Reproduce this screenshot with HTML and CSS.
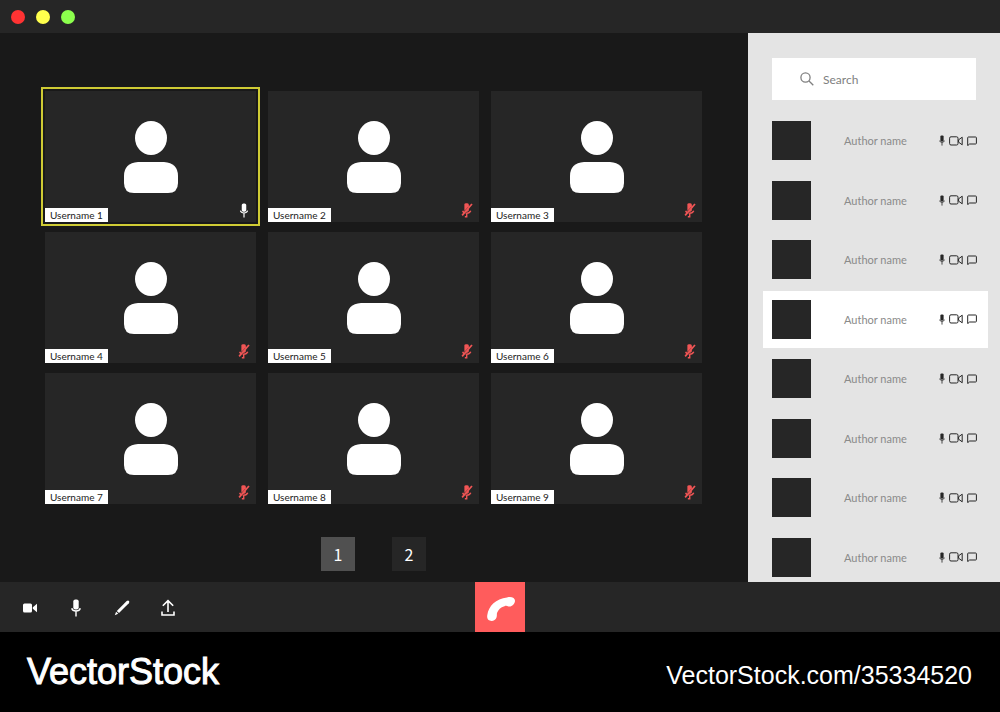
FILE: index.html
```html
<!DOCTYPE html>
<html lang="en">
<head>
    <meta charset="UTF-8">
    <meta name="viewport" content="width=device-width, initial-scale=1.0">
    <title>Video Conference</title>
    <link rel="stylesheet" href="styles.css">
</head>
<body>

    <!-- Shared icons -->
    <svg class="icon-defs" aria-hidden="true">
        <symbol id="person" viewBox="0 0 54 72">
            <ellipse cx="27" cy="17" rx="16" ry="17"/>
            <path d="M14 41H40Q54 42 54 55V62Q54 72 44 72H10Q0 72 0 62V55Q0 42 14 41Z"/>
        </symbol>
        <symbol id="mic" viewBox="0 0 10 18">
            <rect x="2.3" y="0.5" width="5.4" height="10" rx="2"/>
            <path d="M0.7 9.2Q1.5 12 5 12T9.3 9.2M5 12V17.5" fill="none" stroke="currentColor" stroke-width="1.4"/>
        </symbol>
        <symbol id="mic-off" viewBox="0 0 12 16">
            <path d="M3.2 1.5Q3.2 0.3 5 0.3H6.3Q8 0.3 8 2V3.4L3.2 8.4Z"/>
            <path d="M8 5.8V7.5Q8 9.4 6 9.4H4.6Z"/>
            <path d="M11.3 1L0.8 13.2" fill="none" stroke="currentColor" stroke-width="1.8"/>
            <path d="M1.4 8.2Q1.8 9.6 3 10.2M4.5 10.8Q8.6 11.4 10 8.2M5.7 11V15.5M3.7 14.6H5.7" fill="none" stroke="currentColor" stroke-width="1.5"/>
        </symbol>
        <symbol id="camera-line" viewBox="0 0 14 10">
            <rect x="0.6" y="0.8" width="8.4" height="8.2" rx="1.4" fill="none" stroke="currentColor"/>
            <path d="M13.2 1.2V8.8L9.6 6.2V3.8Z" fill="none" stroke="currentColor"/>
        </symbol>
        <symbol id="chat" viewBox="0 0 10 10">
            <path d="M0.7 9.6V1.7Q0.7 1 1.4 1H8.6Q9.4 1 9.4 1.7V7.3Q9.4 8 8.6 8H2.6Z" fill="none" stroke="currentColor"/>
        </symbol>
    </svg>

    <header class="title-bar">
        <span class="dot red"></span>
        <span class="dot yellow"></span>
        <span class="dot green"></span>
    </header>

    <div class="content">
        <main class="stage">
            <div class="tiles">
                <div class="tile active">
                    <svg class="person"><use href="#person"/></svg>
                    <span class="username">Username 1</span>
                    <svg class="tile-mic"><use href="#mic"/></svg>
                </div>
                <div class="tile">
                    <svg class="person"><use href="#person"/></svg>
                    <span class="username">Username 2</span>
                    <svg class="tile-mic muted"><use href="#mic-off"/></svg>
                </div>
                <div class="tile">
                    <svg class="person"><use href="#person"/></svg>
                    <span class="username">Username 3</span>
                    <svg class="tile-mic muted"><use href="#mic-off"/></svg>
                </div>
                <div class="tile">
                    <svg class="person"><use href="#person"/></svg>
                    <span class="username">Username 4</span>
                    <svg class="tile-mic muted"><use href="#mic-off"/></svg>
                </div>
                <div class="tile">
                    <svg class="person"><use href="#person"/></svg>
                    <span class="username">Username 5</span>
                    <svg class="tile-mic muted"><use href="#mic-off"/></svg>
                </div>
                <div class="tile">
                    <svg class="person"><use href="#person"/></svg>
                    <span class="username">Username 6</span>
                    <svg class="tile-mic muted"><use href="#mic-off"/></svg>
                </div>
                <div class="tile">
                    <svg class="person"><use href="#person"/></svg>
                    <span class="username">Username 7</span>
                    <svg class="tile-mic muted"><use href="#mic-off"/></svg>
                </div>
                <div class="tile">
                    <svg class="person"><use href="#person"/></svg>
                    <span class="username">Username 8</span>
                    <svg class="tile-mic muted"><use href="#mic-off"/></svg>
                </div>
                <div class="tile">
                    <svg class="person"><use href="#person"/></svg>
                    <span class="username">Username 9</span>
                    <svg class="tile-mic muted"><use href="#mic-off"/></svg>
                </div>
            </div>

            <nav class="pages" aria-label="Pages">
                <button class="page current" type="button">1</button>
                <button class="page" type="button">2</button>
            </nav>
        </main>

        <aside class="sidebar">
            <label class="search">
                <svg class="search-icon" viewBox="0 0 14 14"><circle cx="5.5" cy="5.5" r="4.6"/><path d="M9 9L13.3 13.3"/></svg>
                <input type="search" placeholder="Search" aria-label="Search">
            </label>

            <ul class="authors">
                <li class="author">
                    <span class="avatar"></span><span class="name">Author name</span>
                    <svg class="small-mic"><use href="#mic"/></svg><svg class="small-camera"><use href="#camera-line"/></svg><svg class="small-chat"><use href="#chat"/></svg>
                </li>
                <li class="author">
                    <span class="avatar"></span><span class="name">Author name</span>
                    <svg class="small-mic"><use href="#mic"/></svg><svg class="small-camera"><use href="#camera-line"/></svg><svg class="small-chat"><use href="#chat"/></svg>
                </li>
                <li class="author">
                    <span class="avatar"></span><span class="name">Author name</span>
                    <svg class="small-mic"><use href="#mic"/></svg><svg class="small-camera"><use href="#camera-line"/></svg><svg class="small-chat"><use href="#chat"/></svg>
                </li>
                <li class="author selected">
                    <span class="avatar"></span><span class="name">Author name</span>
                    <svg class="small-mic"><use href="#mic"/></svg><svg class="small-camera"><use href="#camera-line"/></svg><svg class="small-chat"><use href="#chat"/></svg>
                </li>
                <li class="author">
                    <span class="avatar"></span><span class="name">Author name</span>
                    <svg class="small-mic"><use href="#mic"/></svg><svg class="small-camera"><use href="#camera-line"/></svg><svg class="small-chat"><use href="#chat"/></svg>
                </li>
                <li class="author">
                    <span class="avatar"></span><span class="name">Author name</span>
                    <svg class="small-mic"><use href="#mic"/></svg><svg class="small-camera"><use href="#camera-line"/></svg><svg class="small-chat"><use href="#chat"/></svg>
                </li>
                <li class="author">
                    <span class="avatar"></span><span class="name">Author name</span>
                    <svg class="small-mic"><use href="#mic"/></svg><svg class="small-camera"><use href="#camera-line"/></svg><svg class="small-chat"><use href="#chat"/></svg>
                </li>
                <li class="author">
                    <span class="avatar"></span><span class="name">Author name</span>
                    <svg class="small-mic"><use href="#mic"/></svg><svg class="small-camera"><use href="#camera-line"/></svg><svg class="small-chat"><use href="#chat"/></svg>
                </li>
            </ul>
        </aside>
    </div>

    <div class="controls">
        <div class="tools">
            <button class="tool" type="button" aria-label="Camera">
                <svg width="14" height="10" viewBox="0 0 14 10"><rect x="0" y="0.5" width="9" height="9" rx="1.5"/><path d="M14 0.8V9.2L9.8 5.8V4.2Z"/></svg>
            </button>
            <button class="tool" type="button" aria-label="Microphone">
                <svg width="10" height="18"><use href="#mic"/></svg>
            </button>
            <button class="tool" type="button" aria-label="Draw">
                <svg width="16" height="16" viewBox="0 0 16 16"><path d="M12.7 1.1Q14 0 15 1Q15.9 2 14.8 3.2L5 13L2.8 10.9Z"/><path d="M2.1 11.7L4.2 13.7L0.8 15.2Z"/></svg>
            </button>
            <button class="tool" type="button" aria-label="Share">
                <svg width="14" height="18" viewBox="0 0 14 18"><path d="M7 13V1.8M1.8 6.8L7 1.6L12.2 6.8M1 12.5V16H13V12.5" fill="none" stroke="currentColor" stroke-width="1.6"/></svg>
            </button>
        </div>
        <button class="hang-up" type="button" aria-label="End call">
            <svg width="30" height="26" viewBox="0 0 30 26"><path d="M1.3 19C2.5 10 10 2.5 21 1.4C25.5 0.2 29.2 1.8 29 5C28.8 8.3 25.5 11.2 22.5 10.4C20.8 9.9 20 9.6 18.5 10.2C14.5 11.4 12.3 13.6 11.1 16.8C10.6 18 11.2 19.4 10.5 21.4C9.6 24.2 6.5 25.5 3.8 24.6C1.2 23.7 0.9 21 1.3 19Z"/></svg>
        </button>
    </div>

    <footer class="footer">
        <span class="brand">VectorStock</span>
        <a class="link" href="#">VectorStock.com/35334520</a>
    </footer>

</body>
</html>
```

FILE: styles.css
```css
* {
    margin: 0;
    padding: 0;
    box-sizing: border-box;
}

body {
    font-family: 'Lato', 'Noto Sans', sans-serif;
    background: #000000;
    color: #ffffff;
    display: flex;
    flex-direction: column;
    min-height: 100vh;
}

svg {
    display: block;
    flex: none;
    fill: currentColor;
}

button {
    border: none;
    color: #ffffff;
    font-family: inherit;
    cursor: pointer;
}

.icon-defs {
    position: absolute;
    width: 0;
    height: 0;
}

/* Title bar */
.title-bar {
    display: flex;
    align-items: center;
    gap: 11px;
    height: 33px;
    padding: 0 11px;
    background: #262626;
}

.dot {
    width: 14px;
    height: 14px;
    border-radius: 50%;
}

.red {
    background: #ff3333;
}

.yellow {
    background: #ffff4d;
}

.green {
    background: #8cff4d;
}

/* Video tiles */
.content {
    flex: 1;
    display: flex;
    background: #191919;
}

.stage {
    flex: 1;
    padding: 58px 46px 11px 45px;
    display: flex;
    flex-direction: column;
    justify-content: space-between;
}

.tiles {
    display: grid;
    grid-template-columns: repeat(3, 1fr);
    gap: 10px 12px;
}

.tile {
    position: relative;
    display: flex;
    align-items: center;
    justify-content: center;
    aspect-ratio: 211 / 131;
    background: #262626;
}

.tile.active {
    outline: 2px solid #cfcb34;
    outline-offset: 2px;
}

.person {
    width: 54px;
    height: 72px;
}

.username {
    position: absolute;
    left: 0;
    bottom: 0;
    padding: 0 5px;
    background: #ffffff;
    color: #222222;
    font-size: 10px;
    line-height: 14px;
}

.tile-mic {
    position: absolute;
    right: 6px;
    bottom: 4px;
    width: 12px;
    height: 15px;
}

.muted {
    color: #f15555;
}

.pages {
    display: flex;
    justify-content: center;
    gap: 37px;
}

.page {
    width: 34px;
    height: 34px;
    background: #262626;
    font-family: 'Noto Sans CJK SC', sans-serif;
    font-size: 16px;
    line-height: 34px;
}

.page.current {
    background: #505050;
}

/* Sidebar */
.sidebar {
    display: flex;
    flex-direction: column;
    gap: 12px;
    width: 252px;
    padding: 25px 12px 0 15px;
    background: #e4e4e4;
    overflow: hidden;
}

.search {
    display: flex;
    align-items: center;
    gap: 9px;
    height: 42px;
    margin: 0 12px 0 9px;
    padding: 0 28px;
    background: #ffffff;
}

.search-icon {
    width: 14px;
    height: 14px;
    fill: none;
    stroke: #808080;
    stroke-width: 1.3;
}

.search input {
    flex: 1;
    min-width: 0;
    border: none;
    outline: none;
    background: none;
    font-family: inherit;
    font-size: 12px;
    color: #444444;
}

.search input::placeholder {
    color: #808080;
}

.authors {
    flex: 1;
    display: flex;
    flex-direction: column;
    justify-content: space-between;
    margin-bottom: -4px;
    list-style: none;
}

.author {
    display: flex;
    align-items: center;
    gap: 4px;
    height: 57px;
    padding: 0 11px 0 9px;
    color: #262626;
}

.author.selected {
    background: #ffffff;
}

.avatar {
    width: 39px;
    height: 39px;
    background: #262626;
}

.name {
    flex: 1;
    padding-left: 29px;
    color: #8a8a8a;
    font-size: 11px;
}

.small-mic {
    width: 6px;
    height: 11px;
}

.small-camera {
    width: 14px;
    height: 10px;
}

.small-chat {
    width: 10px;
    height: 10px;
}

/* Call controls */
.controls {
    display: grid;
    grid-template-columns: 1fr 50px 1fr;
    height: 50px;
    background: #262626;
}

.tools {
    display: flex;
    padding-left: 7px;
}

.tool {
    display: flex;
    align-items: center;
    justify-content: center;
    width: 46px;
    padding-top: 2px;
    background: none;
}

.hang-up {
    display: flex;
    align-items: center;
    justify-content: center;
    padding: 3px 0 0 2px;
    background: #ff5c5c;
}

/* Footer */
.footer {
    display: flex;
    align-items: center;
    justify-content: space-between;
    height: 80px;
    padding: 0 28px 0 27px;
}

.brand {
    font-family: 'Liberation Sans', Arial, sans-serif;
    font-size: 36px;
    -webkit-text-stroke: 1px #ffffff;
}

.link {
    padding-top: 6px;
    font-family: 'Liberation Sans', Arial, sans-serif;
    font-size: 25px;
    color: #ffffff;
    text-decoration: none;
}
```
